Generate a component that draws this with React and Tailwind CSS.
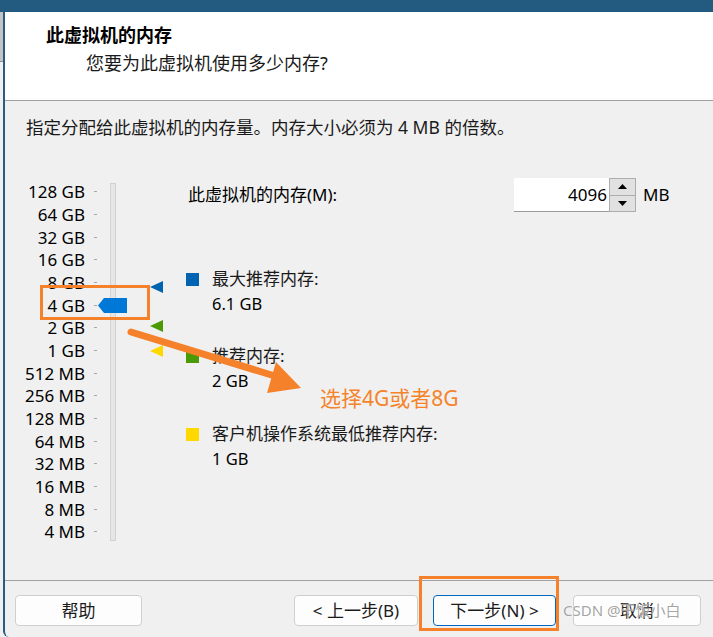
import React from "react";

const sizes = [
  "128 GB", "64 GB", "32 GB", "16 GB", "8 GB", "4 GB", "2 GB", "1 GB",
  "512 MB", "256 MB", "128 MB", "64 MB", "32 MB", "16 MB", "8 MB", "4 MB",
];

const legend = [
  { color: "bg-[#0063b1]", title: "最大推荐内存:", value: "6.1 GB", mt: "mt-[54px]" },
  { color: "bg-[#4a9a06]", title: "推荐内存:", value: "2 GB", mt: "mt-[27px]" },
  { color: "bg-[#ffd800]", title: "客户机操作系统最低推荐内存:", value: "1 GB", mt: "mt-[28px]" },
];

const Button = ({ children, className = "" }) => (
  <button
    className={`h-[31px] rounded-[4px] border bg-[#fdfdfd] text-[17px] text-[#1b1b1b] ${className}`}
  >
    {children}
  </button>
);

const App = () => {
  return (
    <div className="relative w-[713px] h-[637px] overflow-hidden bg-[#f0f0f0] font-['Noto_Sans','Noto_Sans_CJK_SC',sans-serif] text-[#111]">
      {/* window title bar */}
      <div className="h-[12px] bg-[#235a80]" />

      <div className="flex h-[625px]">
        {/* left strip of the window behind */}
        <div className="w-[3px] flex flex-col">
          <div className="h-[50px] bg-[#c4c4c4] border-b border-[#8a8a8a]" />
        </div>

        <div className="flex-1 flex flex-col border-l-2 border-[#2a5b82] rounded-bl-[6px]">
          {/* header */}
          <div className="h-[89px] bg-white border-b border-[#a0a0a0] pl-[41px] pt-[11px]">
            <div className="text-[18px] leading-[24px] font-bold text-black">此虚拟机的内存</div>
            <div className="pl-[40px] mt-[4px] text-[18px] leading-[24px] text-[#1a1a1a]">
              您要为此虚拟机使用多少内存?
            </div>
          </div>

          {/* body */}
          <div className="flex-1 pl-[21px] pt-[14px]">
            <div className="text-[17.5px] leading-[24px] text-[#1a1a1a]">
              指定分配给此虚拟机的内存量。内存大小必须为 4 MB 的倍数。
            </div>

            <div className="flex items-start mt-[39px] -ml-[21px]">
              {/* scale labels + ticks */}
              <div className="flex flex-col pt-[2.67px]">
                {sizes.map((s) => (
                  <div key={s} className="flex items-center h-[22.67px]">
                    <span className="w-[80px] text-right text-[17px] leading-none text-black">{s}</span>
                    <span className="ml-[9px] w-[3px] h-px bg-[#a8a8a8]" />
                  </div>
                ))}
              </div>

              {/* track */}
              <div className="relative ml-[13px] mt-[5px] w-[6px] h-[358px] bg-[#e6e6e6] border border-[#d2d2d2]">
                {/* thumb */}
                <svg className="absolute left-[-13px] top-[114px]" width="29" height="15" viewBox="0 0 29 15">
                  <polygon points="0,7.5 6,0 29,0 29,15 6,15" fill="#0078d7" />
                </svg>
                {/* markers */}
                <svg className="absolute left-[39px] top-[97px]" width="13" height="12" viewBox="0 0 13 12">
                  <polygon points="0,6 13,0 13,12" fill="#0063b1" />
                </svg>
                <svg className="absolute left-[39px] top-[136px]" width="13" height="12" viewBox="0 0 13 12">
                  <polygon points="0,6 13,0 13,12" fill="#4a9a06" />
                </svg>
                <svg className="absolute left-[39px] top-[161px]" width="13" height="12" viewBox="0 0 13 12">
                  <polygon points="0,6 13,0 13,12" fill="#ffd800" />
                </svg>
              </div>

              {/* right panel */}
              <div className="ml-[72px] flex flex-col">
                <div className="flex items-center h-[34px]">
                  <span className="w-[326px] text-[17px] text-black">此虚拟机的内存(M):</span>
                  <div className="flex h-[34px]">
                    <div className="w-[95px] bg-white border-b border-[#9a9a9a] flex items-center justify-end pr-[2px] text-[17px] text-black">
                      4096
                    </div>
                    <div className="w-[27px] flex flex-col border border-[#adadad] bg-[#e1e1e1]">
                      <div className="flex-1 flex items-center justify-center border-b border-[#adadad]">
                        <svg width="9" height="5" viewBox="0 0 9 5"><polygon points="4.5,0 9,5 0,5" fill="#000" /></svg>
                      </div>
                      <div className="flex-1 flex items-center justify-center">
                        <svg width="9" height="5" viewBox="0 0 9 5"><polygon points="0,0 9,0 4.5,5" fill="#000" /></svg>
                      </div>
                    </div>
                  </div>
                  <span className="ml-[7px] text-[17px] text-black">MB</span>
                </div>

                {legend.map((l) => (
                  <div key={l.title} className={`flex ${l.mt}`}>
                    <span className={`w-[13px] h-[13px] mt-[7px] -ml-[2px] ${l.color}`} />
                    <div className="ml-[13px] flex flex-col">
                      <span className="text-[17px] leading-[25px] text-[#1a1a1a]">{l.title}</span>
                      <span className="text-[16.5px] leading-[25px] text-black">{l.value}</span>
                    </div>
                  </div>
                ))}
              </div>
            </div>
          </div>

          {/* footer */}
          <div className="h-[57px] border-t border-[#a0a0a0] flex items-start pt-[14px] pl-[10px]">
            <Button className="w-[127px] border-[#cfcfcf]">帮助</Button>
            <Button className="ml-[152px] w-[124px] border-[#cfcfcf]">&lt; 上一步(B)</Button>
            <Button className="ml-[15px] w-[123px] border-[#0067c0]">下一步(N) &gt;</Button>
            <Button className="ml-[17px] w-[128px] border-[#cfcfcf]">取消</Button>
          </div>
        </div>
      </div>

      {/* annotations */}
      <div className="absolute left-[40px] top-[285px] w-[110px] h-[35px] border-[3px] border-[#f5822a]" />
      <div className="absolute left-[419px] top-[576px] w-[140px] h-[55px] border-[3px] border-[#f5822a]" />
      <svg className="absolute left-0 top-0 pointer-events-none" width="713" height="637" viewBox="0 0 713 637">
        <line x1="131" y1="332" x2="278" y2="377" stroke="#f5822a" strokeWidth="7" strokeLinecap="round" />
        <polygon points="301,388 276,362 267,393" fill="#f5822a" />
      </svg>
      <div className="absolute left-[320px] top-[384px] text-[21px] leading-[28px] text-[#f5832a]">
        选择4G或者8G
      </div>
      <div className="absolute left-[563px] top-[599px] text-[15px] leading-[22px] text-[#9a9a9a]/90 [text-shadow:0_0_2px_#fff]">
        CSDN @干饭小白
      </div>
    </div>
  );
};

export default App;
